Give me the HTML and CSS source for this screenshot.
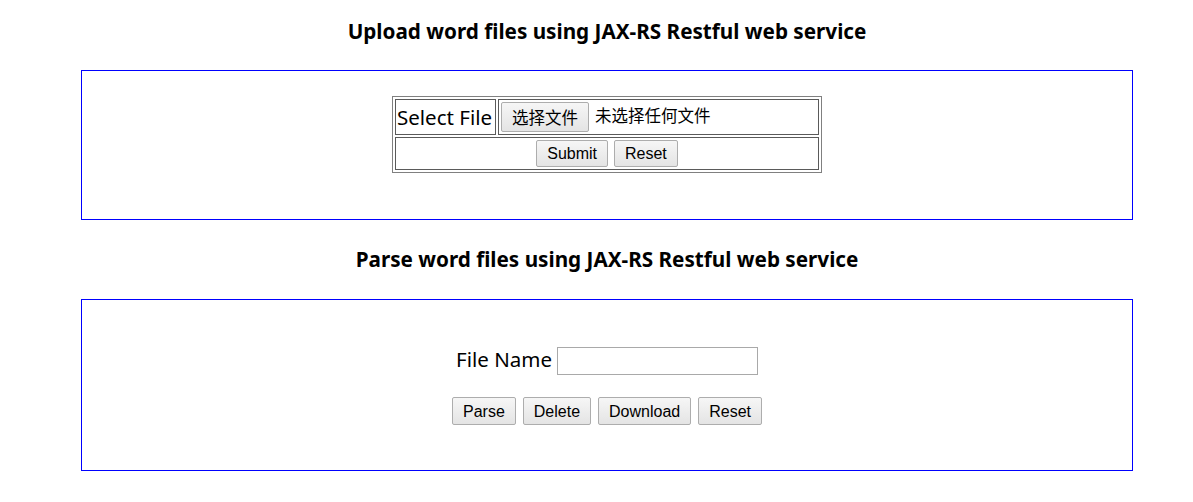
FILE: index.html
```html
<!DOCTYPE html>
<html>
<head>
<meta charset="utf-8">
<title>JAX-RS Word Files</title>
<link rel="stylesheet" href="styles.css">
</head>
<body>
<div class="wrap">
  <h3 class="title first">Upload word files using JAX-RS Restful web service</h3>
  <div class="panel upload">
    <table class="form-table">
      <tr>
        <td class="label-cell">Select File</td>
        <td class="file-cell"><span class="btn file-btn">选择文件</span><span class="file-text">未选择任何文件</span></td>
      </tr>
      <tr>
        <td colspan="2" class="actions-cell"><span class="btn">Submit</span><span class="btn">Reset</span></td>
      </tr>
    </table>
  </div>
  <h3 class="title second">Parse word files using JAX-RS Restful web service</h3>
  <div class="panel parse">
    <div class="name-row">
      <span class="name-label">File Name</span>
      <span class="text-input"></span>
    </div>
    <div class="btn-row">
      <span class="btn">Parse</span><span class="btn">Delete</span><span class="btn">Download</span><span class="btn">Reset</span>
    </div>
  </div>
</div>
</body>
</html>
```

FILE: styles.css
```css
html, body {
  margin: 0;
  padding: 0;
  background: #fff;
  color: #000;
}
body {
  font-family: "Noto Sans", "Open Sans", sans-serif;
}
.wrap {
  margin-left: 81px;
  width: 1052px;
  padding-top: 18px;
}
.title {
  margin: 0;
  text-align: center;
  font-size: 20.7px;
  line-height: 26px;
  font-weight: bold;
}
.title.first { margin-bottom: 26px; }
.title.second { margin-top: 26px; margin-bottom: 27px; }
.panel {
  border: 1px solid #0000ff;
}
.upload {
  display: flex;
  justify-content: center;
  align-items: flex-start;
  padding-top: 25px;
  box-sizing: border-box;
  height: 150px;
}
.form-table {
  border: 1px solid #808080;
  border-spacing: 2px;
  width: 430px;
  height: 77px;
}
.form-table td {
  border: 1px solid #5a5a5a;
  padding: 0 1px;
}
.label-cell {
  font-size: 20.5px;
  width: 97px;
  white-space: nowrap;
  padding-left: 2px;
}
.file-cell {
  font-family: "Noto Sans CJK SC", sans-serif;
  font-size: 16.5px;
  white-space: nowrap;
}
.file-text {
  margin-left: 6px;
}
.actions-cell {
  text-align: center;
}
.btn {
  display: inline-block;
  box-sizing: border-box;
  height: 27px;
  padding: 0 10px;
  border: 1px solid #adadad;
  border-radius: 2px;
  background: linear-gradient(#f6f6f6, #e4e4e4);
  font-family: "Liberation Sans", Arial, sans-serif;
  font-size: 16px;
  line-height: 26px;
  color: #000;
  vertical-align: middle;
  margin: 0 3px;
}
.file-btn {
  font-family: "Noto Sans CJK SC", sans-serif;
  font-size: 16.5px;
  margin: 0 0 0 1px;
  padding: 0 10px;
  height: 30px;
  line-height: 28px;
}
.parse {
  height: 172px;
  box-sizing: border-box;
  padding-top: 47px;
  display: flex;
  flex-direction: column;
  align-items: center;
}
.name-row {
  display: flex;
  align-items: center;
  height: 28px;
}
.name-label {
  font-size: 20.5px;
  margin-right: 5px;
  margin-bottom: 4px;
}
.text-input {
  display: inline-block;
  box-sizing: border-box;
  width: 201px;
  height: 28px;
  border: 1px solid #a9a9a9;
}
.btn-row {
  margin-top: 22px;
  display: flex;
}
.btn-row .btn {
  height: 28px;
  line-height: 27px;
  margin: 0 3.5px;
}
```
